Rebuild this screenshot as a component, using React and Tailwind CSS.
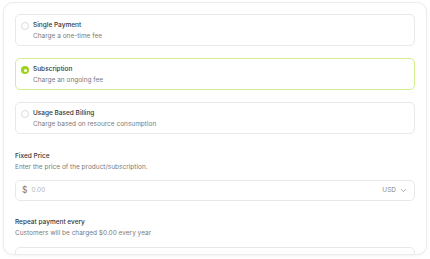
import React, { useState } from "react";

const options = [
  { id: "single", title: "Single Payment", desc: "Charge a one-time fee" },
  { id: "subscription", title: "Subscription", desc: "Charge an ongoing fee" },
  { id: "usage", title: "Usage Based Billing", desc: "Charge based on resource consumption" },
];

const App = () => {
  const [selected, setSelected] = useState("subscription");

  return (
    <div className="w-[430px] h-[259px] bg-white font-['Inter',sans-serif] pt-[2px] pl-[3px]">
      <div className="w-[424px] h-[253px] bg-white border border-[#ececec] rounded-[10px] shadow-[0_1px_3px_rgba(0,0,0,0.05)] overflow-hidden px-[11px] pt-[11px]">
        <div className="flex flex-col gap-[12px]">
          {options.map((opt) => {
            const active = selected === opt.id;
            return (
              <button
                key={opt.id}
                onClick={() => setSelected(opt.id)}
                className={`flex items-start gap-[4px] text-left rounded-[5px] border px-[5px] py-[5px] h-[32px] ${
                  active ? "border-[#d4ee8e] bg-white" : "border-[#e8e8e8] bg-white"
                }`}
              >
                <span
                  className={`mt-[2px] flex h-[8px] w-[8px] shrink-0 items-center justify-center rounded-full ${
                    active ? "bg-[#9bd31c]" : "border border-[#dcdcdc]"
                  }`}
                >
                  {active && <span className="h-[3px] w-[3px] rounded-full bg-white"></span>}
                </span>
                <div className="flex flex-col">
                  <span className="text-[6.5px] leading-[11px] font-medium text-[#363636]">{opt.title}</span>
                  <span className="text-[6.5px] leading-[11px] text-[#7a7a7a]">{opt.desc}</span>
                </div>
              </button>
            );
          })}
        </div>

        <div className="mt-[17px]">
          <p className="text-[6.5px] leading-[11px] font-medium text-[#363636]">Fixed Price</p>
          <p className="text-[6.5px] leading-[11px] text-[#7a7a7a]">Enter the price of the product/subscription.</p>
          <div className="mt-[7px] flex h-[21px] items-center rounded-[5px] border border-[#e8e8e8] px-[6px]">
            <span className="text-[8.5px] text-[#7a7a7a] mr-[4px]">$</span>
            <input
              type="text"
              placeholder="0.00"
              className="flex-1 bg-transparent text-[6.5px] text-[#363636] placeholder:text-[#b5b5b5] focus:outline-none"
            />
            <span className="text-[6.5px] text-[#8a8a8a] mr-[3px]">USD</span>
            <svg width="9" height="9" viewBox="0 0 24 24" fill="none" stroke="#8a8a8a" strokeWidth="2" strokeLinecap="round" strokeLinejoin="round">
              <path d="m6 9 6 6 6-6" />
            </svg>
          </div>
        </div>

        <div className="mt-[16px]">
          <p className="text-[6.5px] leading-[11px] font-medium text-[#363636]">Repeat payment every</p>
          <p className="text-[6.5px] leading-[11px] text-[#7a7a7a]">Customers will be charged $0.00 every year</p>
          <div className="mt-[8px] h-[21px] rounded-[5px] border border-[#e8e8e8]"></div>
        </div>
      </div>
    </div>
  );
};

export default App;
